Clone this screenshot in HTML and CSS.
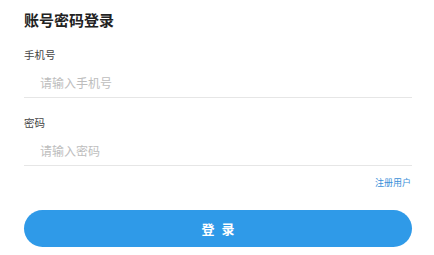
FILE: index.html
```html
<!DOCTYPE html>
<html lang="zh-CN">
<head>
<meta charset="utf-8">
<title>账号密码登录</title>
<link rel="stylesheet" href="styles.css">
</head>
<body>
<main class="login">
  <h1 class="login-title">账号密码登录</h1>
  <div class="field">
    <label class="field-label" for="phone">手机号</label>
    <input class="field-input" id="phone" type="text" placeholder="请输入手机号">
  </div>
  <div class="field">
    <label class="field-label" for="pwd">密码</label>
    <input class="field-input" id="pwd" type="password" placeholder="请输入密码">
  </div>
  <div class="extra">
    <a class="register-link" href="#">注册用户</a>
  </div>
  <button class="login-btn" type="button">登录</button>
</main>
</body>
</html>
```
FILE: styles.css
```css
* { box-sizing: border-box; }
html, body { margin: 0; padding: 0; background: #fff; }
body {
  font-family: "Noto Sans CJK SC", "Noto Sans", sans-serif;
  color: #333;
}
.login {
  display: flex;
  flex-direction: column;
  padding: 8px 22px 0 24px;
}
.login-title {
  margin: 0;
  font-size: 15px;
  line-height: 24px;
  font-weight: 700;
  color: #222;
}
.field {
  display: flex;
  flex-direction: column;
  margin-top: 15px;
}
.field + .field { margin-top: 17px; }
.field-label {
  font-size: 10.5px;
  line-height: 16px;
  color: #444;
}
.field-input {
  margin-top: 4px;
  height: 31px;
  border: none;
  border-bottom: 1px solid #e6e6e6;
  padding: 0 0 0 16px;
  font-family: inherit;
  font-size: 12px;
  color: #333;
  outline: none;
  background: transparent;
}
.field-input::placeholder { color: #bdbdbd; }
.extra {
  display: flex;
  justify-content: flex-end;
  margin-top: 11px;
}
.register-link {
  font-size: 9px;
  line-height: 12px;
  color: #3a8fd9;
  text-decoration: none;
  margin-right: 1px;
}
.login-btn {
  margin-top: 21px;
  height: 37px;
  border: none;
  border-radius: 19px;
  background: #2f9ae8;
  color: #fff;
  font-family: inherit;
  font-size: 13px;
  font-weight: 700;
  letter-spacing: 7px;
  text-indent: 7px;
  cursor: pointer;
}
```
